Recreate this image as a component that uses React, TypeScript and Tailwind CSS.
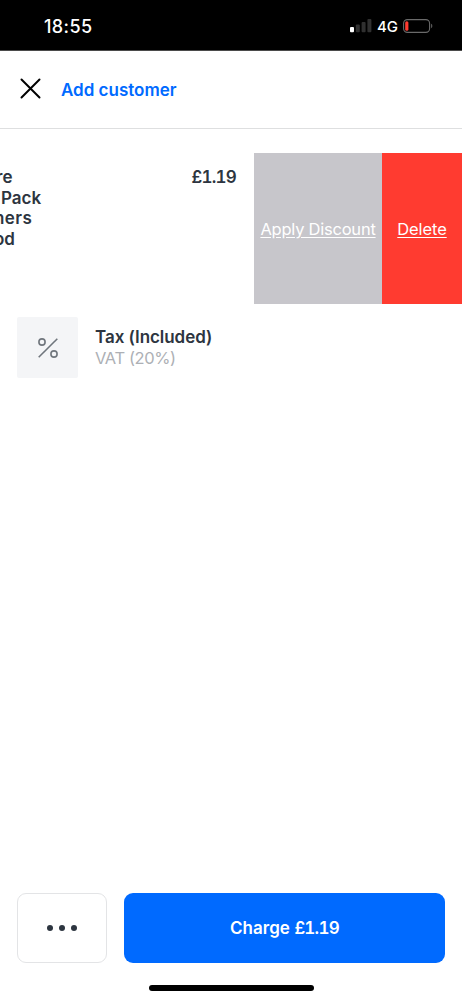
const StatusBar = () => {
  return (
    <div className="flex h-[51px] shrink-0 items-center justify-between border-b border-[#4b4b4b] bg-black pt-[2px] pr-[29px] pl-[44px] text-white">
      <span className="pt-px text-[18px] leading-6 font-medium tracking-[0.4px]">18:55</span>
      <div className="flex items-center">
        {/* Signal */}
        <svg width="22" height="14" viewBox="0 0 22 14" className="mr-[5px]">
          <rect x="0" y="8" width="4" height="5.3" rx="1" fill="#fff" />
          <rect x="5.8" y="5.6" width="4" height="7.7" rx="1" fill="#303030" />
          <rect x="11.6" y="3" width="4" height="10.3" rx="1" fill="#303030" />
          <rect x="17.4" y="0" width="4" height="13.3" rx="1" fill="#303030" />
        </svg>
        <span className="mr-[5px] pt-px text-[15px] leading-6 font-medium">4G</span>
        {/* Battery */}
        <svg width="30" height="14" viewBox="0 0 30 14">
          <rect x="0.6" y="0.6" width="26" height="12.8" rx="3.8" fill="none" stroke="#6a6a6a" strokeWidth="1.1" />
          <rect x="2.2" y="2.2" width="3.2" height="9.6" rx="1.5" fill="#ff3b30" />
          <path d="M28.2 4.8C29.7 5.4 29.7 8.6 28.2 9.2Z" fill="#6a6a6a" />
        </svg>
      </div>
    </div>
  );
};

const Header = () => {
  return (
    <header className="flex h-[78px] shrink-0 items-center border-b border-[#dedfe0] pl-5">
      <button aria-label="Close">
        <svg width="21" height="21" viewBox="0 0 21 21" className="-mt-[2px] block">
          <path d="M1.5 1.5L19.5 19.5M19.5 1.5L1.5 19.5" stroke="#000" strokeWidth="2" strokeLinecap="round" />
        </svg>
      </button>
      <button className="ml-5 text-[17px] leading-6 font-semibold text-[#006aff]">Add customer</button>
    </header>
  );
};

const CartItem = () => {
  return (
    <div className="flex h-[151px] overflow-hidden">
      {/* Row content, swiped to the left */}
      <div className="flex w-[254px] justify-between pt-[14px] pr-[18px] text-[17px] leading-[20.5px] font-semibold text-[#2d3540]">
        <div className="whitespace-nowrap">
          <div className="-ml-[4px]">re</div>
          <div className="ml-[1px]">Pack</div>
          <div className="-ml-[6px] tracking-[0.4px]">ners</div>
          <div className="-ml-[6px]">od</div>
        </div>
        <span className="tracking-[-0.75px] tabular-nums">£1.19</span>
      </div>
      <button className="w-[128px] bg-[#c7c6cb] pt-[2px] text-[16.5px] tracking-[-0.23px] text-white underline underline-offset-2">
        <span className="whitespace-nowrap">Apply Discount</span>
      </button>
      <button className="w-[80px] bg-[#ff3b30] pt-[2px] text-[16.5px] tracking-[-0.1px] text-white underline underline-offset-2">
        Delete
      </button>
    </div>
  );
};

const TaxRow = () => {
  return (
    <div className="mt-[13px] flex items-center pl-[17px]">
      <div className="flex size-[61px] items-center justify-center rounded-[2px] bg-[#f4f5f7]">
        <svg width="22" height="22" viewBox="0 0 22 22" fill="none" stroke="#70767d" strokeWidth="1.6">
          <path d="M1.7 20.3L20.3 1.7" />
          <circle cx="5" cy="5" r="3.1" />
          <circle cx="17" cy="17" r="3.1" />
        </svg>
      </div>
      <div className="ml-[17px] text-[17px] leading-[21px]">
        <div className="font-semibold tracking-[-0.05px] text-[#2d3540]">Tax (Included)</div>
        <div className="text-[16.5px] tracking-[-0.4px] text-[#adb0b5]">VAT (20%)</div>
      </div>
    </div>
  );
};

const App = () => {
  return (
    <div className="flex h-[999px] w-[462px] flex-col overflow-hidden bg-white font-['Inter',sans-serif]">
      <StatusBar />
      <Header />
      <main className="grow pt-6">
        <CartItem />
        <TaxRow />
      </main>

      {/* Actions */}
      <footer className="shrink-0 px-[17px]">
        <div className="flex h-[70px] gap-[17px]">
          <button
            aria-label="More"
            className="flex w-[90px] items-center justify-center gap-[6px] rounded-[9px] border border-[#e3e4e6]"
          >
            <span className="size-[6px] rounded-full bg-[#2d3540]"></span>
            <span className="size-[6px] rounded-full bg-[#2d3540]"></span>
            <span className="size-[6px] rounded-full bg-[#2d3540]"></span>
          </button>
          <button className="grow rounded-[9px] bg-[#006aff] pt-[2px] text-[17px] font-semibold text-white tabular-nums">
            Charge <span className="tracking-[-0.75px]">£1.19</span>
          </button>
        </div>
        <div className="mx-auto mt-[22px] mb-[8px] h-[6px] w-[165px] rounded-full bg-black"></div>
      </footer>
    </div>
  );
};

export default App;
